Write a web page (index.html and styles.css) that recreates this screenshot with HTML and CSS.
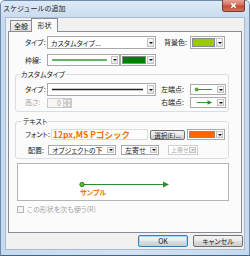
FILE: index.html
```html
<!DOCTYPE html>
<html lang="ja">
<head>
<meta charset="utf-8">
<link rel="stylesheet" href="styles.css">
</head>
<body>
<div class="window">
  <div class="titlebar">
    <span class="title">スケジュールの追加</span>
    <span class="close"><svg width="23" height="11" viewBox="0 0 23 11"><path d="M9 3 L14 8 M14 3 L9 8" stroke="#fff" stroke-width="1.6"/></svg></span>
  </div>
  <div class="client">
    <div class="tabs">
      <span class="tab">全般</span>
      <span class="tab active">形状</span>
    </div>
    <div class="panel">
      <div class="row r1">
        <span class="lbl w22">タイプ:</span>
        <div class="combo w109"><span class="val">カスタムタイプ...</span><span class="arr"></span></div>
        <span class="lbl ml8 w26">背景色:</span>
        <div class="combo ccombo w35"><span class="swatch lime"></span><span class="arr"></span></div>
      </div>
      <div class="row r2">
        <span class="lbl w22">枠線:</span>
        <div class="combo w73"><svg class="line" viewBox="0 0 60 8" preserveAspectRatio="none"><line x1="3" y1="4" x2="57" y2="4" stroke="#3a9a3a" stroke-width="1.5"/></svg><span class="arr"></span></div>
        <div class="combo ccombo w36"><span class="swatch dgreen"></span><span class="arr"></span></div>
      </div>

      <div class="group g1">
        <span class="gtitle">カスタムタイプ</span>
        <div class="grow ga">
          <span class="lbl w22">タイプ:</span>
          <div class="combo w109 h13"><svg class="line" viewBox="0 0 100 8" preserveAspectRatio="none"><line x1="3" y1="4" x2="97" y2="4" stroke="#222" stroke-width="1.2"/></svg><span class="arr"></span></div>
          <span class="lbl ml5 w29">左端点:</span>
          <div class="combo w36 h11"><svg class="line" width="27" height="9" viewBox="0 0 27 9"><line x1="4" y1="4.5" x2="24" y2="4.5" stroke="#2e8b2e" stroke-width="1.2"/><circle cx="4" cy="4.5" r="2" fill="#5cbf2a" stroke="#1f6b1f" stroke-width="0.8"/></svg><span class="arr"></span></div>
        </div>
        <div class="grow gb">
          <span class="lbl w22 dis">高さ:</span>
          <div class="spin"><span class="sval">0</span><span class="sbtns"><span class="sb up"></span><span class="sb dn"></span></span></div>
          <span class="lbl ml89 w29">右端点:</span>
          <div class="combo w36 h11"><svg class="line" width="27" height="9" viewBox="0 0 27 9"><line x1="4" y1="4.5" x2="20" y2="4.5" stroke="#2e8b2e" stroke-width="1.2"/><path d="M18 1.5 L24 4.5 L18 7.5 Z" fill="#2e8b2e"/></svg><span class="arr"></span></div>
        </div>
      </div>

      <div class="group g2">
        <span class="gtitle t2">テキスト</span>
        <div class="grow gc">
          <span class="lbl">フォント:</span>
          <div class="fontbox">12px,MS Pゴシック</div>
          <button class="btn sel">選択(E)...</button>
          <div class="combo ccombo w38 ml2"><span class="swatch orange"></span><span class="arr"></span></div>
        </div>
        <div class="grow gd">
          <span class="lbl w23 pl3">配置:</span>
          <div class="combo w68 h10"><span class="val">オブジェクトの下</span><span class="arr"></span></div>
          <div class="combo w38 h10 ml5"><span class="val">左寄せ</span><span class="arr"></span></div>
          <div class="combo w30 h10 ml9 disabled"><span class="val">上寄せ</span><span class="arr"></span></div>
        </div>
      </div>

      <div class="preview">
        <div class="sample">
          <svg width="92" height="7" viewBox="0 0 92 7"><line x1="3" y1="3.5" x2="86" y2="3.5" stroke="#2e8b2e" stroke-width="1.2"/><circle cx="3" cy="3.5" r="2.2" fill="#5cbf2a" stroke="#1f6b1f" stroke-width="0.8"/><path d="M84 0.5 L90 3.5 L84 6.5 Z" fill="#2e8b2e"/></svg>
          <span class="stext">サンプル</span>
        </div>
      </div>

      <div class="check">
        <span class="cbox"></span>
        <span class="ctext">この形状を次も使う(R)</span>
      </div>
    </div>
    <div class="buttons">
      <button class="btn big def">OK</button>
      <button class="btn big">キャンセル</button>
    </div>
  </div>
</div>
</body>
</html>
```
FILE: styles.css
```css
* { box-sizing: border-box; margin: 0; padding: 0; }
html, body { width: 250px; height: 256px; overflow: hidden; background: #fff; }
body {
  font-family: "Noto Sans CJK JP", "Noto Sans", sans-serif;
  font-size: 7px;
  line-height: 9px;
  color: #1a1a1a;
  font-feature-settings: "palt";
}
.window {
  width: 250px;
  height: 256px;
  background: linear-gradient(90deg, #c6d9ee, #d4e3f3 50%, #c6d9ee);
  border: 1px solid #6d8aa8;
  border-bottom-color: #3d6585;
  border-radius: 5px 5px 0 0;
  display: flex;
  flex-direction: column;
}
.titlebar {
  height: 16px;
  display: flex;
  align-items: flex-start;
  background: linear-gradient(#dde9f6, #cbdcef);
  border-radius: 4px 4px 0 0;
}
.title {
  margin: 3px 0 0 2px;
  font-size: 7px;
  line-height: 9px;
  color: #222;
  font-feature-settings: normal;
}
.close {
  margin: -1px 4px 0 auto;
  width: 23px;
  height: 12px;
  display: flex;
  background: linear-gradient(#e8a598, #d2705d 45%, #c34a33 55%, #d1745a);
  border: 1px solid #7d3a30;
  border-top: none;
  border-radius: 0 0 3px 3px;
}
.close svg { display: block; }
.client {
  margin: 0 4px;
  height: 233px;
  background: #f0f0f0;
  border: 1px solid #a8bbd0;
  display: flex;
  flex-direction: column;
}
.tabs {
  height: 13px;
  display: flex;
  align-items: flex-end;
  padding-left: 4px;
  position: relative;
  z-index: 1;
}
.tab {
  width: 21px;
  height: 11px;
  border: 1px solid #898c95;
  border-bottom: none;
  border-right: none;
  background: linear-gradient(#f2f2f2, #e3e3e3);
  text-align: center;
  line-height: 10px;
  font-size: 7px;
}
.tab.active {
  width: 27px;
  height: 14px;
  margin-bottom: -1px;
  background: #fbfbfb;
  border-right: 1px solid #898c95;
  line-height: 13px;
}
.panel {
  margin-left: 2px;
  width: 234px;
  height: 202px;
  border: 1px solid #898c95;
  background: #fbfbfb;
  display: flex;
  flex-direction: column;
}
.row { display: flex; align-items: center; padding-left: 16px; }
.r1 { margin-top: 4px; height: 13px; }
.r2 { margin-top: 5px; height: 12px; }
.lbl { flex: none; white-space: nowrap; font-size: 7px; line-height: 9px; }
.w22 { width: 22px; }
.w23 { width: 23px; }
.w26 { width: 26px; }
.w29 { width: 29px; }
.ml2 { margin-left: 2px; }
.ml5 { margin-left: 5px; }
.ml8 { margin-left: 8px; }
.ml9 { margin-left: 9px; }
.ml89 { margin-left: 89px; }
.pl3 { padding-left: 3px; }
.dis { color: #a3a3a3; }

.combo {
  flex: none;
  display: flex;
  align-items: stretch;
  height: 100%;
  background: #fff;
  border: 1px solid #a9a9a9;
  padding: 1px;
}
.h13 { height: 13px; }
.h11 { height: 11px; }
.h10 { height: 10px; padding: 0 1px; }
.w109 { width: 109px; }
.w73 { width: 73px; }
.w68 { width: 68px; }
.w38 { width: 38px; }
.w36 { width: 36px; }
.w35 { width: 35px; }
.w30 { width: 30px; }
.combo .val {
  flex: 1;
  min-width: 0;
  padding-left: 2px;
  white-space: nowrap;
  overflow-x: clip;
  overflow-y: visible;
  font-size: 7px;
  line-height: 8px;
  display: flex;
  align-items: center;
}
.h10 .arr { margin-top: 1px; margin-bottom: 1px; }
.combo .line { flex: 1; height: 100%; min-width: 0; display: block; }
.arr {
  flex: none;
  width: 7px;
  margin-left: 1px;
  border: 1px solid #c3c3c3;
  background: linear-gradient(#fafafa, #e6e6e6);
  display: flex;
  align-items: center;
  justify-content: center;
}
.arr::after {
  content: "";
  border-left: 2px solid transparent;
  border-right: 2px solid transparent;
  border-top: 2px solid #111;
}
.ccombo { padding: 1px; }
.swatch { flex: 1; border: 1px solid #8a8a8a; }
.lime { background: #99cc00; }
.dgreen { background: #008000; }
.orange { background: #ff6600; }
.disabled { border-color: #cfcfcf; }
.disabled .val { color: #a8a8a8; font-size: 6px; padding-left: 1px; }
.disabled .arr::after { border-top-color: #b0b0b0; }

.group {
  flex: none;
  margin-left: 6px;
  width: 214px;
  height: 38px;
  border: 1px solid #d5dfe5;
  border-radius: 3px;
  display: flex;
  flex-direction: column;
}
.g1 { margin-top: 8px; }
.g2 { margin-top: 9px; }
.gtitle {
  display: block;
  width: fit-content;
  margin: -5px 0 0 4px;
  padding: 0 1px;
  height: 9px;
  line-height: 9px;
  background: #fbfbfb;
  font-size: 7px;
  color: #1a1a1a;
}
.gtitle.t2 { margin-left: 6px; }
.grow { display: flex; align-items: center; padding-left: 9px; }
.ga { margin-top: 4px; height: 13px; }
.gb { margin-top: 1px; height: 11px; }
.gc { margin-top: 3px; height: 11px; padding-right: 3px; }
.gd { margin-top: 5px; height: 10px; }

.spin {
  flex: none;
  width: 25px;
  height: 10px;
  border: 1px solid #c9c9c9;
  background: #f7f7f7;
  display: flex;
}
.sval {
  flex: 1;
  text-align: right;
  padding-right: 2px;
  font-size: 7px;
  line-height: 8px;
  color: #a3a3a3;
}
.sbtns { width: 8px; display: flex; flex-direction: column; }
.sb {
  flex: 1;
  border: 1px solid #cfcfcf;
  background: #f0f0f0;
  display: flex;
  align-items: center;
  justify-content: center;
}
.sb.up::after { content: ""; border: 1.5px solid transparent; border-bottom: 2px solid #b0b0b0; border-top: none; }
.sb.dn::after { content: ""; border: 1.5px solid transparent; border-top: 2px solid #b0b0b0; border-bottom: none; }

.fontbox {
  flex: 1;
  min-width: 0;
  margin-left: 1px;
  height: 11px;
  padding-left: 1px;
  border: 1px solid #dcdcdc;
  background: #fdfdfd;
  color: #f07000;
  font-weight: bold;
  font-size: 8.5px;
  line-height: 9px;
  white-space: nowrap;
  overflow: hidden;
  font-feature-settings: normal;
}
.btn {
  flex: none;
  font-family: inherit;
  font-feature-settings: "palt";
  font-size: 7px;
  line-height: 8px;
  color: #1a1a1a;
  border: 1px solid #707070;
  border-radius: 2px;
  background: linear-gradient(#f3f3f3 0%, #ebebeb 50%, #dcdcdc 51%, #cfcfcf 100%);
  white-space: nowrap;
}
.btn.sel { margin-left: 2px; width: 35px; height: 10px; font-size: 6.5px; }

.preview {
  flex: none;
  margin: 4px 0 0 8px;
  width: 212px;
  height: 38px;
  background: #fff;
  border: 1px solid #b4b4b4;
}
.sample { margin: 17px 0 0 61px; display: flex; flex-direction: column; align-items: flex-start; }
.sample svg { display: block; }
.stext {
  margin-left: 1px;
  color: #f07000;
  font-weight: bold;
  font-size: 7px;
  line-height: 9px;
}
.check {
  margin: 4px 0 0 8px;
  display: flex;
  align-items: center;
  height: 9px;
}
.cbox {
  width: 7px;
  height: 7px;
  border: 1px solid #b5b5b5;
  background: #f4f4f4;
}
.ctext { margin-left: 3px; color: #a3a3a3; font-size: 7px; }

.buttons {
  margin-top: 2px;
  height: 12px;
  display: flex;
  justify-content: flex-end;
  gap: 5px;
  padding-right: 1px;
}
.btn.big { width: 50px; height: 12px; }
.btn.def { border-color: #3c7fb1; box-shadow: inset 0 0 0 1px #a9d8f5; }
```
